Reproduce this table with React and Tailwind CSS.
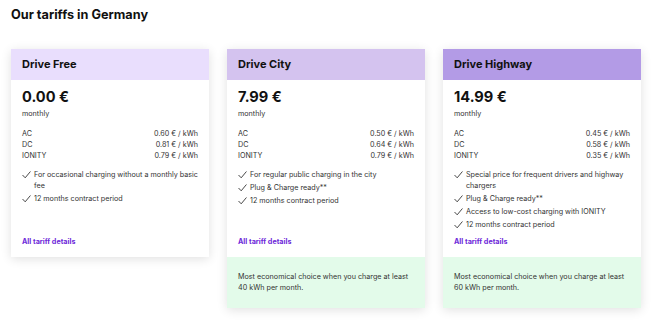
import React from "react";

const tariffs = [
  {
    name: "Drive Free",
    header: "bg-[#e9defd]",
    price: "0.00 €",
    rates: [
      ["AC", "0.60 € / kWh"],
      ["DC", "0.81 € / kWh"],
      ["IONITY", "0.79 € / kWh"],
    ],
    features: ["For occasional charging without a monthly basic fee", "12 months contract period"],
    footer: null,
  },
  {
    name: "Drive City",
    header: "bg-[#d4c3ef]",
    price: "7.99 €",
    rates: [
      ["AC", "0.50 € / kWh"],
      ["DC", "0.64 € / kWh"],
      ["IONITY", "0.79 € / kWh"],
    ],
    features: ["For regular public charging in the city", "Plug & Charge ready**", "12 months contract period"],
    footer: "Most economical choice when you charge at least 40 kWh per month.",
  },
  {
    name: "Drive Highway",
    header: "bg-[#b39be6]",
    price: "14.99 €",
    rates: [
      ["AC", "0.45 € / kWh"],
      ["DC", "0.58 € / kWh"],
      ["IONITY", "0.35 € / kWh"],
    ],
    features: [
      "Special price for frequent drivers and highway chargers",
      "Plug & Charge ready**",
      "Access to low-cost charging with IONITY",
      "12 months contract period",
    ],
    footer: "Most economical choice when you charge at least 60 kWh per month.",
  },
];

function Check() {
  return (
    <svg width="9" height="8" viewBox="0 0 9 8" className="shrink-0 mt-[2px]" fill="none">
      <path d="M0.8 4.3 L3.2 6.8 L8.2 0.8" stroke="#333" strokeWidth="0.9" strokeLinecap="round" strokeLinejoin="round" />
    </svg>
  );
}

function Card({ t }) {
  return (
    <div className="w-[198px] flex flex-col self-start bg-white shadow-[0_2px_10px_rgba(0,0,0,0.12)]">
      <div className={`${t.header} h-[31px] flex items-center px-[11px]`}>
        <span className="text-[11px] font-bold text-[#111]">{t.name}</span>
      </div>
      <div className="flex flex-col px-[11px] pt-[7px] pb-[11px] h-[177px]">
        <div className="text-[14.6px] font-bold leading-[20px] text-[#111]">{t.price}</div>
        <div className="text-[7.2px] leading-[11px] text-[#333] mt-[1px]">monthly</div>
        <div className="mt-[9px] flex flex-col">
          {t.rates.map(([k, v]) => (
            <div key={k} className="flex justify-between text-[7.2px] leading-[11px] text-[#333]">
              <span>{k}</span>
              <span>{v}</span>
            </div>
          ))}
        </div>
        <div className="mt-[8px] flex flex-col gap-[2px]">
          {t.features.map((f) => (
            <div key={f} className="flex gap-[3px] text-[7.2px] leading-[11px] text-[#333]">
              <Check />
              <span>{f}</span>
            </div>
          ))}
        </div>
        <div className="mt-auto text-[7.2px] leading-[11px] font-bold text-[#6d28d9] translate-y-[1px]">All tariff details</div>
      </div>
      {t.footer && (
        <div className="bg-[#e3fbea] h-[51px] px-[11px] pt-[14px] text-[7.2px] leading-[11px] text-[#333]">
          {t.footer}
        </div>
      )}
    </div>
  );
}

export default function App() {
  return (
    <div className="w-[653px] h-[320px] bg-white font-['Inter',sans-serif] px-[11px] pt-[6px]">
      <h1 className="text-[12.7px] font-bold leading-[18px] text-[#111]">Our tariffs in Germany</h1>
      <div className="flex gap-[18px] mt-[25px]">
        {tariffs.map((t) => (
          <Card key={t.name} t={t} />
        ))}
      </div>
    </div>
  );
}
